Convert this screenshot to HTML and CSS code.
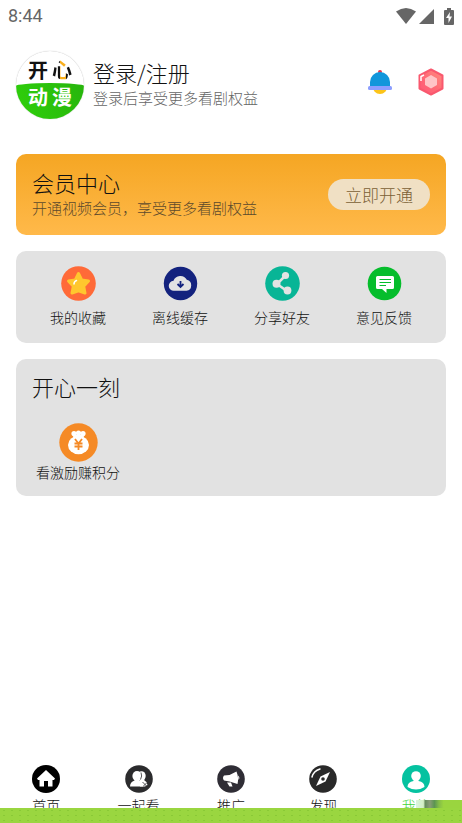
FILE: index.html
```html
<!DOCTYPE html>
<html lang="zh-CN">
<head>
<meta charset="utf-8">
<meta name="viewport" content="width=device-width, initial-scale=1">
<title>我的</title>
<link rel="stylesheet" href="styles.css">
</head>
<body>
<div class="status">
  <span>8:44</span>
  <div class="status-icons">
    <svg width="20" height="16" viewBox="0 0 20 16"><path d="M0 3.5Q10-3.5 20 3.5L10 16Z"/></svg>
    <svg width="15" height="15" viewBox="0 0 15 15"><path d="M15 0V15H0Z"/></svg>
    <svg class="battery" width="10" height="17" viewBox="0 0 10 17"><path d="M3 0H7V2H9Q10 2 10 3V16Q10 17 9 17H1Q0 17 0 16V3Q0 2 1 2H3Z"/><path d="M6 4L2 10H4.500V15L8 8.500H5.500Z" fill="#fff"/></svg>
  </div>
</div>

<main>
  <header class="profile">
    <a class="avatar" href="#login">
      <span class="avatar-top"><span>开</span><span class="heart">心</span></span>
      <span class="avatar-bottom"><span>动</span><span>漫</span></span>
    </a>
    <div class="account">
      <h1>登录/注册</h1>
      <p>登录后享受更多看剧权益</p>
    </div>
    <div class="shortcuts">
      <button aria-label="消息">
        <svg width="26" height="26" viewBox="0 0 26 26"><circle cx="13" cy="3" r="2" fill="#e8384f"/><circle cx="13" cy="17.500" r="7.500" fill="#fcc419"/><path d="M3 18V13A10 10 0 0 1 23 13V18Z" fill="#1296db"/><rect x="1" y="17" width="24" height="4" rx="1.500" fill="#8c9eff"/></svg>
      </button>
      <button aria-label="会员等级">
        <svg width="26" height="28" viewBox="0 0 26 28"><defs><linearGradient id="gem" x1="0" y1="1" x2="1" y2="0"><stop offset="0" stop-color="#ff5878"/><stop offset=".5" stop-color="#ff6b75"/><stop offset="1" stop-color="#ff8f80"/></linearGradient></defs><path d="M13 1.500L24.500 7.500V20.500L13 26.500L1.500 20.500V7.500Z" fill="url(#gem)" stroke="#f9586e" stroke-width="2" stroke-linejoin="round"/><path d="M13 7L19 10.500V17L13 20.500L7 17V10.500Z" fill="#ffc4c6"/><path d="M3 13V8.500L6 7" fill="none" stroke="#fff" stroke-width="1.500"/></svg>
      </button>
    </div>
  </header>

  <section class="vip">
    <div>
      <h2>会员中心</h2>
      <p>开通视频会员，享受更多看剧权益</p>
    </div>
    <button class="open">立即开通</button>
  </section>

  <section class="card actions">
    <a href="#favorites">
      <svg width="35" height="35" viewBox="0 0 35 35"><circle cx="17.500" cy="17.500" r="17.300" fill="#ff6a38"/><path d="M17.500 7.500L20.700 14L27.500 15L22.700 20.300L24 27L17.500 24.800L11 27L12.300 20.300L7.500 15L14.300 14Z" fill="#ffc72e" stroke="#ffc72e" stroke-width="3" stroke-linejoin="round"/><path d="M13 18Q13 15.500 15.500 14.500" fill="none" stroke="#fff" stroke-width="1.500" stroke-linecap="round"/></svg>
      <span>我的收藏</span>
    </a>
    <a href="#downloads">
      <svg width="35" height="35" viewBox="0 0 35 35"><circle cx="17.500" cy="17.500" r="16.700" fill="#13227e"/><path d="M11 24.800A5 5 0 0 1 10.500 14.800A7.300 7.300 0 0 1 23.800 13.800A5.600 5.600 0 0 1 23.500 24.800Z" fill="#e3e3e3"/><path d="M17.500 15V20M14.500 18L17.500 21L20.500 18" stroke="#13227e" stroke-width="1.800" fill="none"/></svg>
      <span>离线缓存</span>
    </a>
    <a href="#share">
      <svg width="35" height="35" viewBox="0 0 35 35"><circle cx="17.500" cy="17.500" r="17.300" fill="#08b596"/><path d="M20 10L12 18L22 25" fill="none" stroke="#e3e3e3" stroke-width="2.500"/><circle cx="20.500" cy="9.500" r="3.600" fill="#e3e3e3"/><circle cx="11.500" cy="17.800" r="4" fill="#e3e3e3"/><circle cx="22.500" cy="24.500" r="3.900" fill="#e3e3e3"/></svg>
      <span>分享好友</span>
    </a>
    <a href="#feedback">
      <svg width="35" height="35" viewBox="0 0 35 35"><circle cx="17.500" cy="17.500" r="16.800" fill="#06bd2c"/><path d="M10.500 10H25.500Q27 10 27 11.500V21.500Q27 23 25.500 23H19.500V27L15 23H10.500Q9 23 9 21.500V11.500Q9 10 10.500 10Z" fill="#fff"/><path d="M12.500 13.500H24M12.500 16.500H24M12.500 19.500H19" stroke="#06bd2c" stroke-width="1.200"/></svg>
      <span>意见反馈</span>
    </a>
  </section>

  <section class="card moment">
    <h2>开心一刻</h2>
    <a href="#rewards">
      <svg width="39" height="39" viewBox="0 0 39 39"><circle cx="19.500" cy="19.500" r="19.200" fill="#f58a26"/><g fill="#fff"><ellipse cx="19.500" cy="22" rx="10.500" ry="9.200"/><circle cx="15" cy="10.500" r="2.600"/><circle cx="19.500" cy="10" r="2.600"/><circle cx="24" cy="10.500" r="2.600"/><path d="M13.500 12H25.500L23.500 17H15.500Z"/></g><path d="M16 16L19.500 20.500L23 16M15.500 20.500H23.500M15.500 23.500H23.500M19.500 20V27" stroke="#f58a26" stroke-width="1.800" fill="none"/></svg>
      <span>看激励赚积分</span>
    </a>
  </section>
</main>

<nav>
  <a href="#home">
    <svg width="28" height="28" viewBox="0 0 28 28"><circle cx="14" cy="14" r="14" fill="#000"/><path d="M14 5L23 13.500L22 15H20.500V21.500H16V16H12V21.500H7.500V15H6L5 13.500Z" fill="#fff"/></svg>
    <span>首页</span>
  </a>
  <a href="#together">
    <svg width="28" height="28" viewBox="0 0 28 28"><circle cx="14" cy="14" r="13.800" fill="#2b2b2d"/><g fill="#fff"><ellipse cx="16.500" cy="11" rx="4.200" ry="4.800"/><path d="M15 15H19Q22 16.500 22.500 20L20 21.500H15Z"/><ellipse cx="12" cy="11" rx="4.600" ry="5"/><path d="M9.500 14H14.500V15.500Q18 17 18 21.500H5Q5 17 9.500 15.500Z"/></g><path d="M16 7.500Q17.500 11 15.500 14.500M17.500 17L22 21.500M18.500 21L21.500 18" fill="none" stroke="#2b2b2d" stroke-width=".8"/></svg>
    <span>一起看</span>
  </a>
  <a href="#promote">
    <svg width="28" height="28" viewBox="0 0 28 28"><circle cx="14" cy="14" r="13.800" fill="#2f2d35"/><path d="M7 10.500L12.500 10L19.500 6.500Q22 13 20.500 19L12.500 16.500L7 15.500Q5 13 7 10.500Z" fill="#fff"/><path d="M21 10.500Q23.500 12.500 21.500 15M10 17.500H14L15.500 21.500H12.500Z" fill="#fff"/></svg>
    <span>推广</span>
  </a>
  <a href="#discover">
    <svg width="28" height="28" viewBox="0 0 28 28"><circle cx="14" cy="14" r="13.800" fill="#292929"/><path d="M21 7L16.500 16.500L7 21L11.500 11.500Z" fill="#fff"/><circle cx="14" cy="14" r="1.800" fill="#292929"/><path d="M3 12Q4.500 6 11 4" stroke="#fff" stroke-width="1.500" fill="none" stroke-linecap="round"/></svg>
    <span>发现</span>
  </a>
  <a class="current" href="#me">
    <svg width="28" height="28" viewBox="0 0 28 28"><circle cx="14" cy="14" r="14" fill="#05c2a0"/><circle cx="14" cy="11" r="4.800" fill="#fff"/><path d="M11.500 13H16.500V16Q22.500 17 22.500 22Q14 27 5.500 22Q5.500 17 11.500 16Z" fill="#fff"/></svg>
    <span>我的</span>
  </a>
  <i class="smear"></i>
</nav>
<div class="strip"></div>
</body>
</html>
```
FILE: styles.css
```css
* {
  box-sizing: border-box;
}

body {
  margin: 0;
  min-height: 100vh;
  display: flex;
  flex-direction: column;
  background: #fff;
  color: #111;
  font-family: "Noto Sans CJK SC", sans-serif;
  font-weight: 300;
}

h1, h2, p {
  margin: 0;
  font-weight: 300;
}

a {
  color: inherit;
  text-decoration: none;
}

button {
  border: 0;
  padding: 0;
  background: none;
  font: inherit;
}

svg {
  display: block;
}

.status {
  height: 32px;
  padding: 0 8px;
  display: flex;
  align-items: center;
  justify-content: space-between;
  color: #666;
  font: 400 18px/32px Roboto, sans-serif;
}

.status-icons {
  display: flex;
  align-items: center;
  gap: 3px;
  fill: #666;
}

.battery {
  margin-left: 7px;
}

main {
  padding: 19px 16px 16px;
  display: grid;
  gap: 16px;
}

.profile {
  display: flex;
  align-items: center;
  margin-bottom: 19px;
}

.avatar {
  width: 68px;
  height: 68px;
  border-radius: 50%;
  overflow: hidden;
  display: grid;
  grid-template-rows: 32px 36px;
  box-shadow: 0 0 1px #aaa;
  font-size: 20px;
  line-height: 28px;
  font-weight: 700;
}

.avatar-top,
.avatar-bottom {
  display: flex;
  justify-content: center;
  gap: 4px;
}

.avatar-top {
  padding-top: 5px;
}

.heart {
  color: transparent;
  background: linear-gradient(90deg, #111 42%, #f9ae1b 42%, #f9ae1b 72%, #111 72%);
  background-clip: text;
  -webkit-background-clip: text;
}

.avatar-bottom {
  color: #fff;
  border-radius: 50% 50% 0 0 / 3px 3px 0 0;
  background: linear-gradient(70deg, #2fd00b, #27b50c);
}

.account {
  flex: 1;
  margin-left: 9px;
}

h1, h2 {
  font-size: 22px;
  line-height: 26px;
}

.account p,
.vip p {
  font-size: 15px;
  line-height: 26px;
}

.account p {
  color: #666;
}

.shortcuts {
  display: flex;
  align-items: center;
  gap: 25px;
  margin: 0 2px 6px 0;
}

.vip {
  min-height: 81px;
  padding: 0 16px;
  border-radius: 10px;
  background: linear-gradient(#f5a623, #ffb94a);
  display: flex;
  align-items: center;
  justify-content: space-between;
}

.vip p {
  color: #5d4a2c;
}

.open {
  padding: 0 17px;
  border-radius: 16px;
  background: #f0e0c4;
  color: #7a5f35;
  font-size: 17px;
  line-height: 31px;
}

.card {
  border-radius: 10px;
  background: #e2e2e2;
}

.actions {
  padding: 15px 11px 16px;
  display: grid;
  grid-template-columns: repeat(4, 1fr);
}

.actions a,
.moment a,
nav a {
  display: flex;
  flex-direction: column;
  align-items: center;
  font-size: 14px;
  line-height: 20px;
}

.actions a {
  gap: 6px;
}

.moment {
  padding: 14px 16px;
}

.moment a {
  width: 92px;
  margin-top: 24px;
}

nav {
  position: relative;
  height: 43px;
  margin-top: auto;
  overflow: hidden;
  display: grid;
  grid-template-columns: repeat(5, 1fr);
}

nav a {
  gap: 2px;
}

.current {
  color: #42d43b;
}

.smear {
  position: absolute;
  right: 0;
  bottom: 0;
  width: 46px;
  height: 8px;
  background: linear-gradient(90deg, #d9f5df, #d5efc5 16%, #668c5c 20%, #8a9c77 30%, #5c9452 40%, #85bd48 50%, #9ad53f 60%);
}

.strip {
  height: 15px;
  background: radial-gradient(circle, #89c936 1px, transparent 1px) 0 0 / 8px 5px #9ad640;
}
```
